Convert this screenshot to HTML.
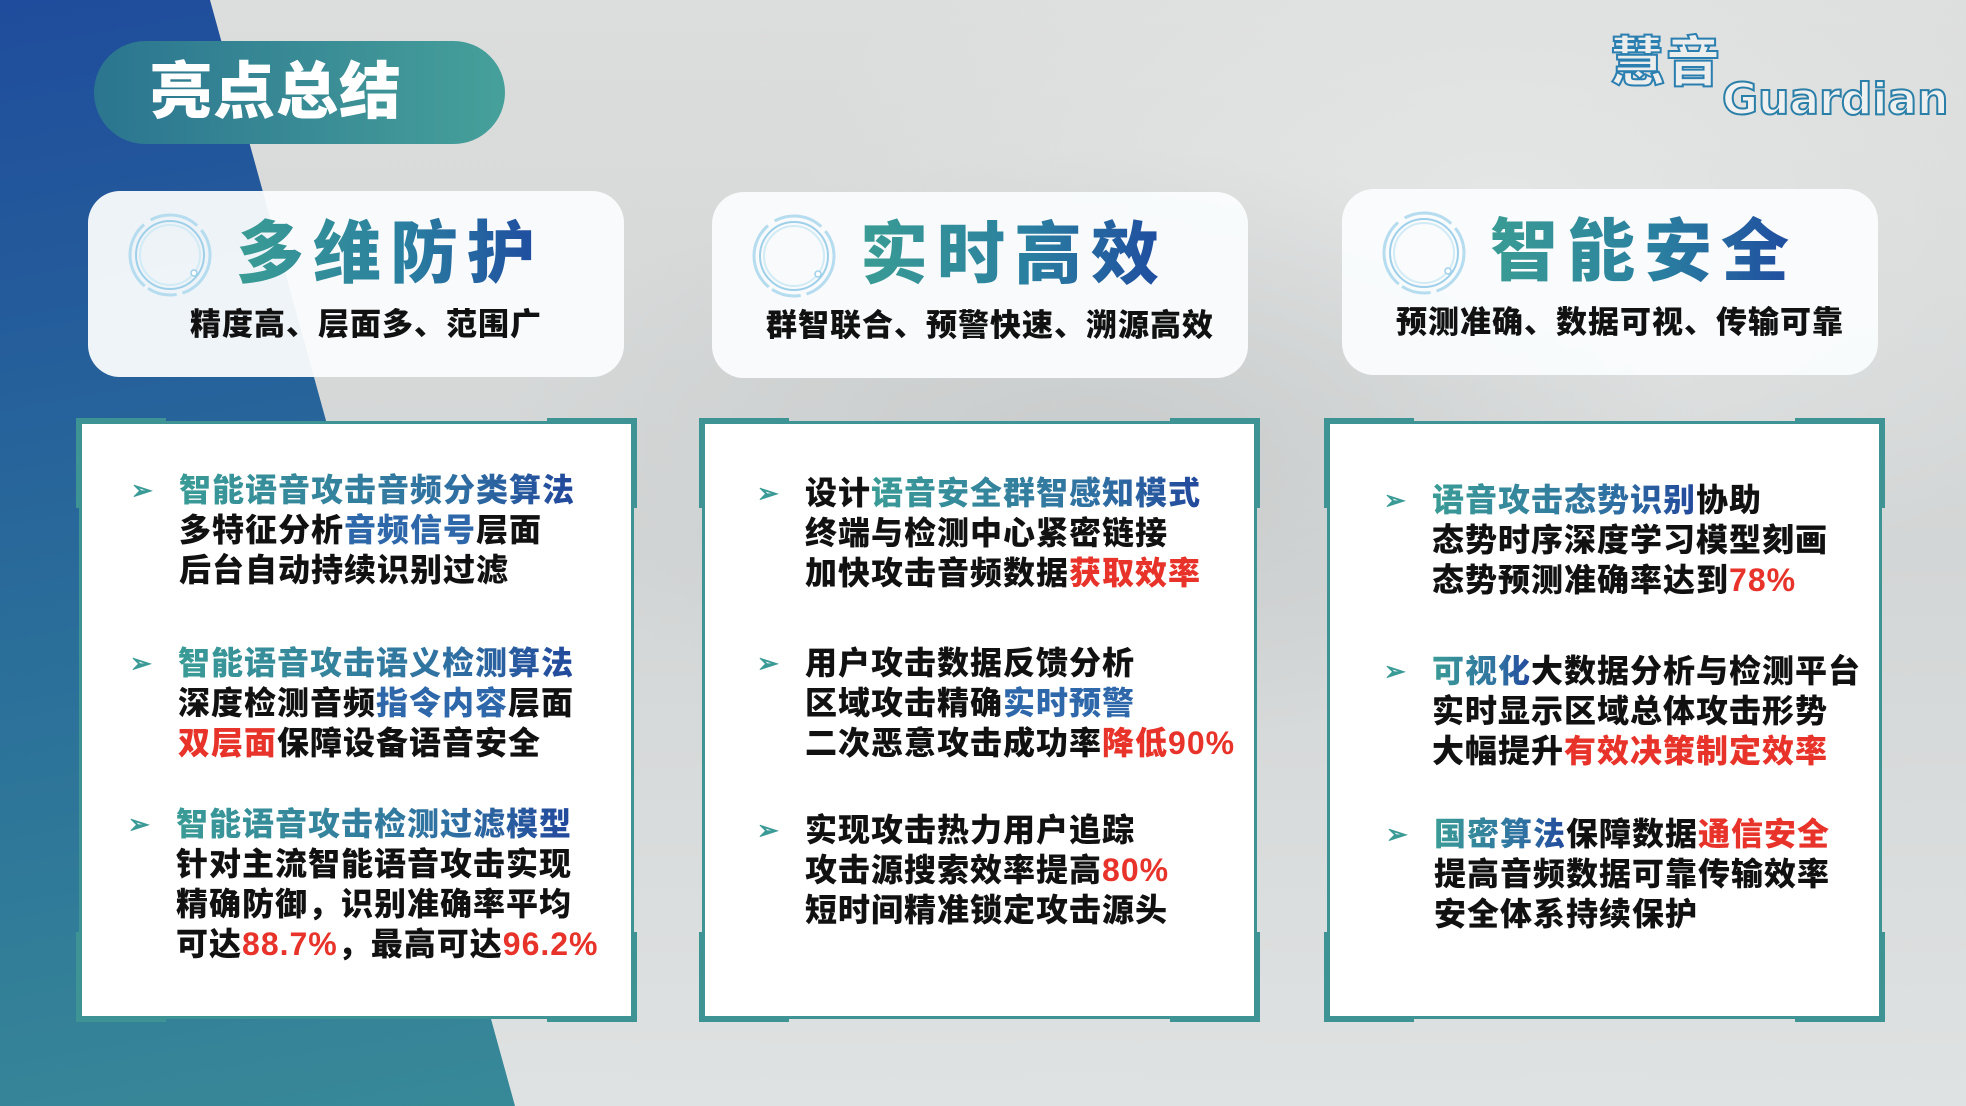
<!DOCTYPE html>
<html><head><meta charset="utf-8">
<style>
*{margin:0;padding:0;box-sizing:border-box}
body{width:1966px;height:1106px;overflow:hidden;position:relative;font-family:"Liberation Sans","Noto Sans CJK SC",sans-serif;
background:radial-gradient(ellipse 600px 300px at 1100px 450px,#c9cccc,transparent),radial-gradient(ellipse 700px 400px at 1500px 200px,#e4e6e6,transparent),linear-gradient(180deg,#dcdddd,#d3d6d6 50%,#dfe2e2);}
.lbg{position:absolute;left:0;top:0;width:1966px;height:1106px;background:linear-gradient(170deg,#1f4c9c 0%,#2a6e9a 45%,#3e9696 100%);clip-path:polygon(0 0,210px 0,515px 1106px,0 1106px)}
.pill{position:absolute;left:94px;top:41px;width:411px;height:103px;border-radius:52px;background:linear-gradient(90deg,#2b7590,#46a09a);color:#fff;font-size:62px;font-weight:900;line-height:103px;padding-left:56px;letter-spacing:1px}
.logo1{position:absolute;left:1610px;top:18px;font-size:54px;font-weight:900;color:rgba(255,255,255,.4);-webkit-text-stroke:2px #2a7fb0;letter-spacing:2px}
.logo2{position:absolute;left:1722px;top:72px;font-size:44px;font-weight:bold;font-family:"DejaVu Sans",sans-serif;color:rgba(255,255,255,.5);-webkit-text-stroke:2px #2a7fa8;line-height:56px}
.card{position:absolute;width:536px;height:186px;border-radius:32px;background:rgba(250,252,253,.95)}
.ring{position:absolute;left:38px;top:20px;width:88px;height:88px}
.ct{position:absolute;left:148px;top:18px;font-size:68px;font-weight:900;letter-spacing:9px;background:linear-gradient(90deg,#3a9c94,#2a7fa0 55%,#1f4aa0);-webkit-background-clip:text;background-clip:text;color:transparent;line-height:90px}
.cs{position:absolute;left:10px;width:100%;top:112px;text-align:center;font-size:31px;font-weight:900;color:#111;line-height:44px;letter-spacing:1px}
.box{position:absolute;width:555px;height:598px;background:#fff;border:3px solid #3e9494}
.box i{position:absolute;background:#3e9494}
.g{position:absolute;font-size:32px;font-weight:900;line-height:40px;color:#111;white-space:nowrap;letter-spacing:1px}
.g .b{position:absolute;left:-48px;top:0;color:#3a9a96;font-size:26px}
.h{background:linear-gradient(90deg,#3a9c96,#2f6fa2 70%,#22489c);-webkit-background-clip:text;background-clip:text;color:transparent}
.bl{color:#2e68aa}
.r{color:#e8332a}
</style></head><body>
<div class="lbg"></div>
<div class="pill">亮点总结</div>
<div class="logo1">慧音</div>
<div class="logo2">Guardian</div>

<svg width="0" height="0" style="position:absolute"><defs><symbol id="rg" viewBox="0 0 88 88"><circle cx="44" cy="44" r="40" fill="none" stroke="#b5dcef" stroke-width="3" stroke-dasharray="50 6 30 4 70 8"/><circle cx="44" cy="44" r="34" fill="none" stroke="#9fd0ea" stroke-width="2"/><circle cx="44" cy="44" r="30" fill="none" stroke="#d2ebf5" stroke-width="2"/><circle cx="68" cy="62" r="3" fill="#fff" stroke="#9fd0ea" stroke-width="1.5"/></symbol></defs></svg>

<div class="card" style="left:88px;top:191px"><svg class="ring"><use href="#rg"/></svg><div class="ct">多维防护</div><div class="cs">精度高、层面多、范围广</div></div>
<div class="card" style="left:712px;top:192px"><svg class="ring"><use href="#rg"/></svg><div class="ct">实时高效</div><div class="cs">群智联合、预警快速、溯源高效</div></div>
<div class="card" style="left:1342px;top:189px"><svg class="ring"><use href="#rg"/></svg><div class="ct">智能安全</div><div class="cs">预测准确、数据可视、传输可靠</div></div>

<div class="box" style="left:79px;top:421px"><i style="left:-6px;top:-6px;width:90px;height:6px"></i><i style="left:-6px;top:-6px;width:6px;height:90px"></i><i style="right:-6px;top:-6px;width:90px;height:6px"></i><i style="right:-6px;top:-6px;width:6px;height:90px"></i><i style="left:-6px;bottom:-6px;width:90px;height:6px"></i><i style="left:-6px;bottom:-6px;width:6px;height:90px"></i><i style="right:-6px;bottom:-6px;width:90px;height:6px"></i><i style="right:-6px;bottom:-6px;width:6px;height:90px"></i></div>
<div class="box" style="left:702px;top:421px"><i style="left:-6px;top:-6px;width:90px;height:6px"></i><i style="left:-6px;top:-6px;width:6px;height:90px"></i><i style="right:-6px;top:-6px;width:90px;height:6px"></i><i style="right:-6px;top:-6px;width:6px;height:90px"></i><i style="left:-6px;bottom:-6px;width:90px;height:6px"></i><i style="left:-6px;bottom:-6px;width:6px;height:90px"></i><i style="right:-6px;bottom:-6px;width:90px;height:6px"></i><i style="right:-6px;bottom:-6px;width:6px;height:90px"></i></div>
<div class="box" style="left:1327px;top:421px"><i style="left:-6px;top:-6px;width:90px;height:6px"></i><i style="left:-6px;top:-6px;width:6px;height:90px"></i><i style="right:-6px;top:-6px;width:90px;height:6px"></i><i style="right:-6px;top:-6px;width:6px;height:90px"></i><i style="left:-6px;bottom:-6px;width:90px;height:6px"></i><i style="left:-6px;bottom:-6px;width:6px;height:90px"></i><i style="right:-6px;bottom:-6px;width:90px;height:6px"></i><i style="right:-6px;bottom:-6px;width:6px;height:90px"></i></div>

<div class="g" style="left:179px;top:470px"><span class="b">➢</span><span class="h">智能语音攻击音频分类算法</span><br>多特征分析<span class="bl">音频信号</span>层面<br>后台自动持续识别过滤</div>
<div class="g" style="left:178px;top:643px"><span class="b">➢</span><span class="h">智能语音攻击语义检测算法</span><br>深度检测音频<span class="bl">指令内容</span>层面<br><span class="r">双层面</span>保障设备语音安全</div>
<div class="g" style="left:176px;top:804px"><span class="b">➢</span><span class="h">智能语音攻击检测过滤模型</span><br>针对主流智能语音攻击实现<br>精确防御，识别准确率平均<br>可达<span class="r">88.7%</span>，最高可达<span class="r">96.2%</span></div>

<div class="g" style="left:805px;top:473px"><span class="b">➢</span>设计<span class="h">语音安全群智感知模式</span><br>终端与检测中心紧密链接<br>加快攻击音频数据<span class="r">获取效率</span></div>
<div class="g" style="left:805px;top:643px"><span class="b">➢</span>用户攻击数据反馈分析<br>区域攻击精确<span class="bl">实时预警</span><br>二次恶意攻击成功率<span class="r">降低90%</span></div>
<div class="g" style="left:805px;top:810px"><span class="b">➢</span>实现攻击热力用户追踪<br>攻击源搜索效率提高<span class="r">80%</span><br>短时间精准锁定攻击源头</div>

<div class="g" style="left:1432px;top:480px"><span class="b">➢</span><span class="h">语音攻击态势识别</span>协助<br>态势时序深度学习模型刻画<br>态势预测准确率达到<span class="r">78%</span></div>
<div class="g" style="left:1432px;top:651px"><span class="b">➢</span><span class="h">可视化</span>大数据分析与检测平台<br>实时显示区域总体攻击形势<br>大幅提升<span class="r">有效决策制定效率</span></div>
<div class="g" style="left:1434px;top:814px"><span class="b">➢</span><span class="h">国密算法</span>保障数据<span class="r">通信安全</span><br>提高音频数据可靠传输效率<br>安全体系持续保护</div>
</body></html>
